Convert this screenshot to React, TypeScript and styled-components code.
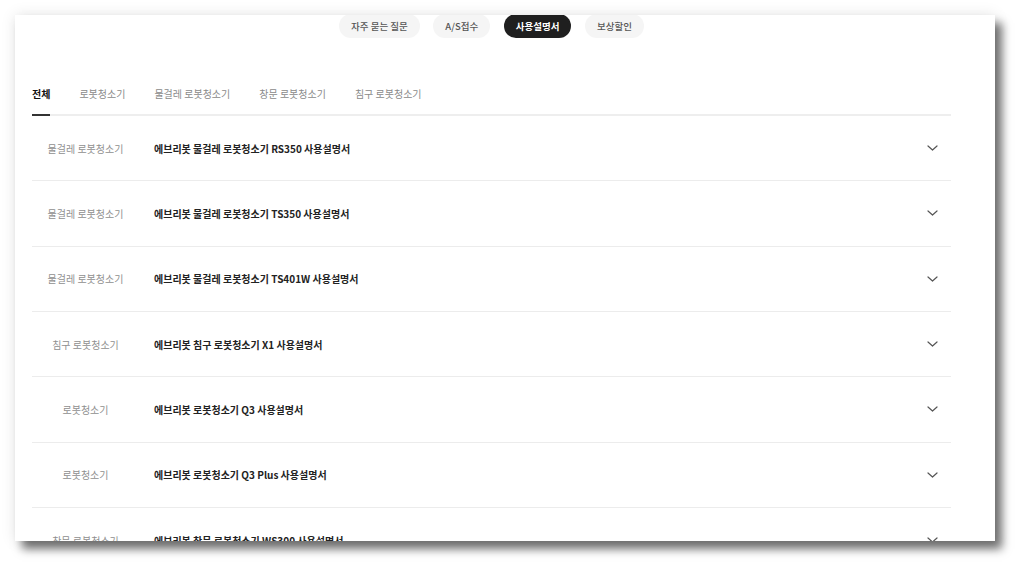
import React from 'react';
import styled, { createGlobalStyle } from 'styled-components';

const GlobalStyle = createGlobalStyle`
    html, body {
        margin: 0;
        padding: 0;
        background: #ffffff;
        font-family: "Noto Sans CJK KR", "Noto Sans", sans-serif;
    }
    * {
        box-sizing: border-box;
    }
`;

const categories = ['자주 묻는 질문', 'A/S접수', '사용설명서', '보상할인'];
const tabs = ['전체', '로봇청소기', '물걸레 로봇청소기', '창문 로봇청소기', '침구 로봇청소기'];

const manuals = [
    { cat: '물걸레 로봇청소기', title: '에브리봇 물걸레 로봇청소기 RS350 사용설명서' },
    { cat: '물걸레 로봇청소기', title: '에브리봇 물걸레 로봇청소기 TS350 사용설명서' },
    { cat: '물걸레 로봇청소기', title: '에브리봇 물걸레 로봇청소기 TS401W 사용설명서' },
    { cat: '침구 로봇청소기', title: '에브리봇 침구 로봇청소기 X1 사용설명서' },
    { cat: '로봇청소기', title: '에브리봇 로봇청소기 Q3 사용설명서' },
    { cat: '로봇청소기', title: '에브리봇 로봇청소기 Q3 Plus 사용설명서' },
    { cat: '창문 로봇청소기', title: '에브리봇 창문 로봇청소기 WS300 사용설명서' },
];

const Chevron = () => (
    <svg width="11" height="6" viewBox="0 0 11 6" fill="none">
        <path d="M1 1l4.5 4L10 1" stroke="#555" strokeWidth="1.2" strokeLinecap="round" strokeLinejoin="round" />
    </svg>
);

const App: React.FC = () => {
    return (
        <Page>
            <GlobalStyle />
            <Card>
                <Content>
                    <PillRow>
                        {categories.map((c) => (
                            <Pill key={c} $active={c === '사용설명서'}>{c}</Pill>
                        ))}
                    </PillRow>
                    <TabBar>
                        {tabs.map((t, i) => (
                            <Tab key={t} $active={i === 0}>{t}</Tab>
                        ))}
                    </TabBar>
                    <List>
                        {manuals.map((m) => (
                            <Row key={m.title}>
                                <Category>{m.cat}</Category>
                                <Title>{m.title}</Title>
                                <Toggle>
                                    <Chevron />
                                </Toggle>
                            </Row>
                        ))}
                    </List>
                </Content>
            </Card>
        </Page>
    );
};

export default App;

const Page = styled.div`
    width: 1024px;
    height: 571px;
    padding: 15px 0 0 15px;
    overflow: hidden;
`;

const Card = styled.div`
    width: 980px;
    height: 526px;
    background: #ffffff;
    overflow: hidden;
    box-shadow: 0 0 14px rgba(0, 0, 0, 0.1), 7px 8px 9px rgba(0, 0, 0, 0.55);
`;

const Content = styled.div`
    width: 919px;
    margin-left: 17px;
`;

const PillRow = styled.div`
    display: flex;
    justify-content: center;
    gap: 13.5px;
    margin-top: -1px;
`;

const Pill = styled.div<{ $active?: boolean }>`
    height: 24px;
    padding: 0 12px;
    border-radius: 12px;
    display: flex;
    align-items: center;
    font-size: 9.5px;
    font-weight: ${(p) => (p.$active ? 700 : 500)};
    color: ${(p) => (p.$active ? '#ffffff' : '#555555')};
    background: ${(p) => (p.$active ? '#1f1f1f' : '#f5f5f5')};
`;

const TabBar = styled.div`
    display: flex;
    gap: 29px;
    margin-top: 49px;
    border-bottom: 2px solid #eeeeee;
`;

const Tab = styled.div<{ $active?: boolean }>`
    font-size: 10px;
    line-height: 14px;
    padding-bottom: 13px;
    margin-bottom: -2px;
    font-weight: ${(p) => (p.$active ? 700 : 400)};
    color: ${(p) => (p.$active ? '#111111' : '#8a8a8a')};
    border-bottom: 2px solid ${(p) => (p.$active ? '#333333' : 'transparent')};
`;

const List = styled.div`
    display: flex;
    flex-direction: column;
`;

const Row = styled.div`
    display: flex;
    align-items: center;
    height: 65.33px;
    flex-shrink: 0;
    border-bottom: 1px solid #ececec;
`;

const Category = styled.div`
    width: 107px;
    flex-shrink: 0;
    text-align: center;
    font-size: 10px;
    color: #8f8f8f;
`;

const Title = styled.div`
    flex: 1;
    padding-left: 15px;
    font-size: 10px;
    font-weight: 700;
    color: #222222;
`;

const Toggle = styled.div`
    width: 11px;
    margin-right: 13px;
    display: flex;
    align-items: center;
`;
